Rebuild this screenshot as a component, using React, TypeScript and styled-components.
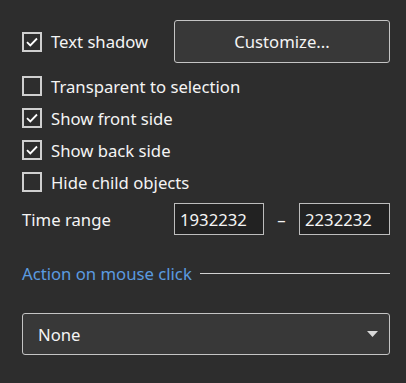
import React, { useState } from "react";
import styled, { createGlobalStyle } from "styled-components";

const Global = createGlobalStyle`
  html, body { margin: 0; padding: 0; background: #2d2d2d; }
  body { font-family: "Noto Sans", "Open Sans", sans-serif; }
  * { box-sizing: border-box; }
`;

const Panel = styled.div`
  width: 406px;
  height: 383px;
  background: #2d2d2d;
  padding: 20px 16px 0 22px;
  color: #f4f4f4;
  font-size: 16.7px;
  display: flex;
  flex-direction: column;
`;

const TopRow = styled.div`
  display: grid;
  grid-template-columns: 152px 1fr;
  align-items: center;
  height: 43px;
  margin-bottom: 7px;
`;

const CheckRow = styled.label`
  display: flex;
  align-items: center;
  height: 32px;
  gap: 9px;
  cursor: pointer;
  white-space: nowrap;
`;

const InlineCheck = styled(CheckRow)`
  height: auto;
`;

const Box = styled.span<{ $checked: boolean }>`
  width: 20px;
  height: 20px;
  flex: none;
  border: 2px solid #cfcfcf;
  background: #2d2d2d;
  display: flex;
  align-items: center;
  justify-content: center;
`;

const Button = styled.button`
  height: 43px;
  border: 1px solid #c4c4c4;
  border-radius: 3px;
  background: #383838;
  color: #f4f4f4;
  font: inherit;
  padding: 0;
`;

const TimeRow = styled.div`
  display: grid;
  grid-template-columns: 152px 90px 35px 91px;
  align-items: center;
  height: 32px;
  margin-top: 5px;
`;

const Input = styled.input`
  height: 32px;
  width: 100%;
  border: 1px solid #bdbdbd;
  background: #222222;
  color: #f4f4f4;
  font: inherit;
  padding: 0 5px;
  outline: none;
`;

const Dash = styled.span`
  text-align: center;
`;

const SectionHeader = styled.div`
  display: flex;
  align-items: center;
  gap: 8px;
  margin-top: 26px;
  height: 24px;
  color: #5b9be0;
  white-space: nowrap;
`;

const Rule = styled.div`
  flex: 1;
  height: 1px;
  background: #d0d0d0;
`;

const Select = styled.div`
  margin-top: 28px;
  height: 42px;
  border: 1px solid #c4c4c4;
  border-radius: 3px;
  background: #383838;
  display: flex;
  align-items: center;
  justify-content: space-between;
  padding: 0 11px 0 15px;
`;

const Check = ({ checked, label, onToggle, inline }: { checked: boolean; label: string; onToggle: () => void; inline?: boolean }) => {
  const Row = inline ? InlineCheck : CheckRow;
  return (
    <Row onClick={onToggle}>
      <Box $checked={checked}>
        {checked && (
          <svg width="12" height="10" viewBox="0 0 12 10">
            <path d="M1 5.2 L4.3 8.4 L11 1.5" fill="none" stroke="#ffffff" strokeWidth="1.8" />
          </svg>
        )}
      </Box>
      {label}
    </Row>
  );
};

export default function App() {
  const [s, setS] = useState({ shadow: true, transp: false, front: true, back: true, hide: false });
  const t = (k: keyof typeof s) => () => setS({ ...s, [k]: !s[k] });
  return (
    <>
      <Global />
      <Panel>
        <TopRow>
          <Check inline checked={s.shadow} label="Text shadow" onToggle={t("shadow")} />
          <Button>Customize...</Button>
        </TopRow>
        <Check checked={s.transp} label="Transparent to selection" onToggle={t("transp")} />
        <Check checked={s.front} label="Show front side" onToggle={t("front")} />
        <Check checked={s.back} label="Show back side" onToggle={t("back")} />
        <Check checked={s.hide} label="Hide child objects" onToggle={t("hide")} />
        <TimeRow>
          <span>Time range</span>
          <Input defaultValue="1932232" />
          <Dash>–</Dash>
          <Input defaultValue="2232232" />
        </TimeRow>
        <SectionHeader>
          Action on mouse click
          <Rule />
        </SectionHeader>
        <Select>
          <span>None</span>
          <svg width="11" height="6" viewBox="0 0 11 6">
            <path d="M0 0 L11 0 L5.5 6 Z" fill="#d8d8d8" />
          </svg>
        </Select>
      </Panel>
    </>
  );
}
